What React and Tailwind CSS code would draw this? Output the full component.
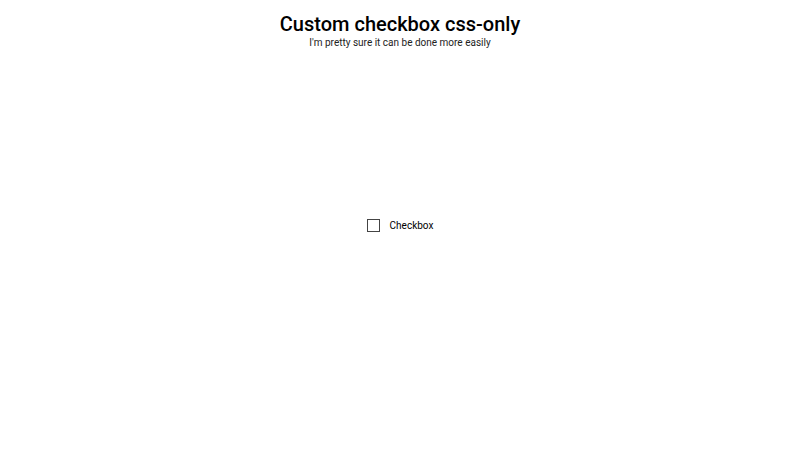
export default function App() {
  return (
    <div className="flex flex-col h-screen bg-white text-black font-['Roboto',sans-serif]">
      <header className="text-center pt-[13px]">
        <h1 className="text-[20px] leading-[23px] font-medium">Custom checkbox css-only</h1>
        <p className="text-[10px] leading-[12px] mt-[1px] text-[#222]">I'm pretty sure it can be done more easily</p>
      </header>
      <div className="flex-1 flex items-center justify-center pb-[49px]">
        <label className="flex items-center gap-[10px] text-[10px] cursor-pointer">
          <input type="checkbox" className="peer hidden" />
          <span className="w-[13px] h-[13px] border border-[#444] bg-white" />
          <span>Checkbox</span>
        </label>
      </div>
    </div>
  );
}
